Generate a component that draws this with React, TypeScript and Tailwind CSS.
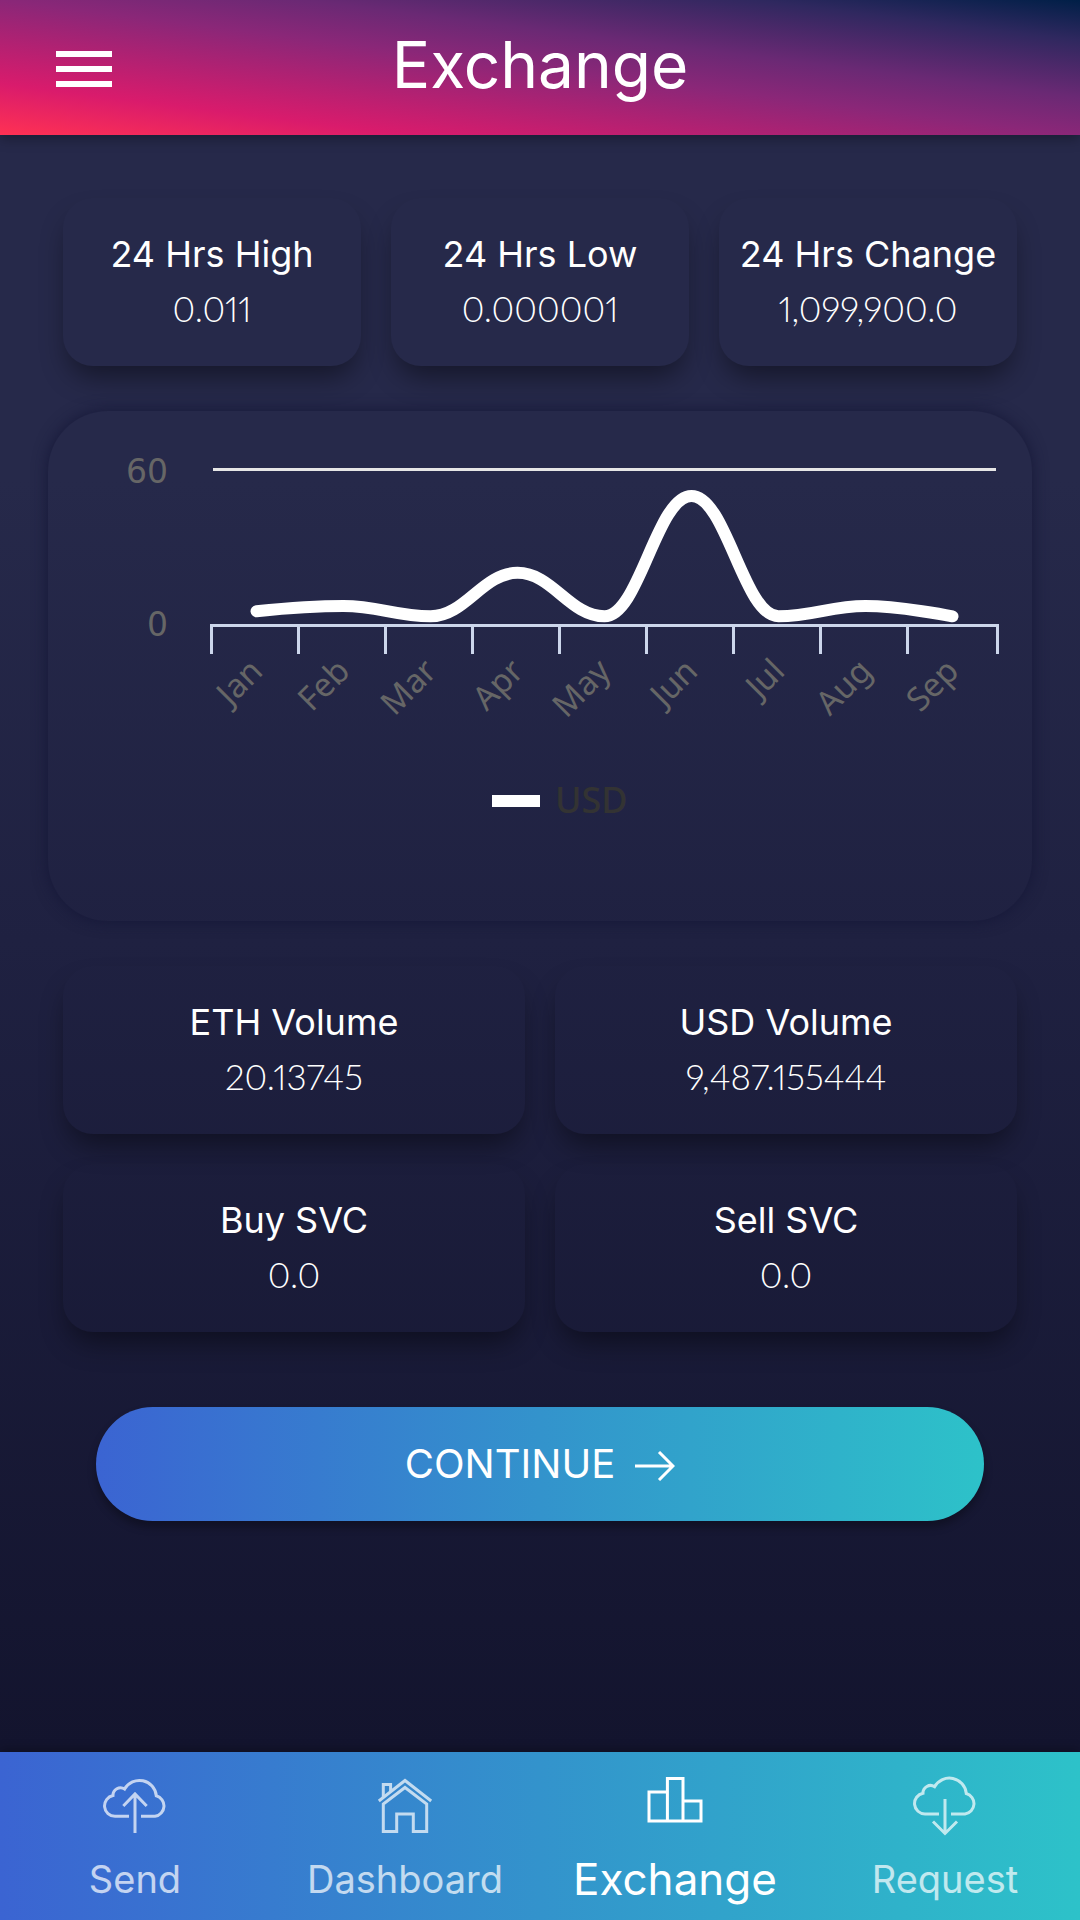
import type { ReactNode } from "react"

const dayStats = [
  { label: "24 Hrs High", value: "0.011" },
  { label: "24 Hrs Low", value: "0.000001" },
  { label: "24 Hrs Change", value: "1,099,900.0" },
]

const marketStats = [
  { label: "ETH Volume", value: "20.13745" },
  { label: "USD Volume", value: "9,487.155444" },
  { label: "Buy SVC", value: "0.0" },
  { label: "Sell SVC", value: "0.0" },
]

const series = [
  { month: "Jan", usd: 5 },
  { month: "Feb", usd: 7 },
  { month: "Mar", usd: 3 },
  { month: "Apr", usd: 20 },
  { month: "May", usd: 3 },
  { month: "Jun", usd: 50 },
  { month: "Jul", usd: 3 },
  { month: "Aug", usd: 7 },
  { month: "Sep", usd: 3 },
]

const cloud =
  "M26 42.3H12A10.5 10.5 0 0 1 10 21.5A7.5 7.5 0 0 1 21.6 15A17 17 0 0 1 53.3 21.8A10.5 10.5 0 0 1 52 42.3H38"

const tabs: { name: string; active?: boolean; icon: ReactNode }[] = [
  {
    name: "Send",
    icon: (
      <>
        <path d={cloud} />
        <path d="M32 59V20M20.3 32L32 20L43.7 32" />
      </>
    ),
  },
  {
    name: "Dashboard",
    icon: (
      <>
        <path d="M5.8 27L32 6.5L58.2 27" />
        <path d="M10.3 24V10.5H17.6V18" />
        <path d="M32 13.5L53.7 30V57.5H40.3V40H23.7V57.5H10.3V30Z" />
      </>
    ),
  },
  {
    name: "Exchange",
    active: true,
    icon: <path d="M24.4 47H6V18H24.4M40 27H58V47H24.4V4.5H40V47" />,
  },
  {
    name: "Request",
    icon: (
      <>
        <path d={cloud} transform="translate(0 -2.3)" />
        <path d="M32 25V59M20 47.5L32 59.5L44 47.5" />
      </>
    ),
  },
]

const PLOT_LEFT = 165
const PLOT_WIDTH = 783
const AXIS_Y = 213
const STEP = PLOT_WIDTH / series.length

const points = series.map((item, i) => ({
  x: PLOT_LEFT + STEP * (i + 0.5),
  y: AXIS_Y - item.usd * 2.56,
}))

// Smooth line that never overshoots a neighbouring point
function splinePath() {
  let path = `M${points[0].x} ${points[0].y}`
  let out = points[0]

  for (let i = 1; i < points.length; i++) {
    const last = points[i - 1]
    const p = points[i]
    const next = points[i + 1]
    let left = p
    let right = p

    if (next) {
      const lx = (1.5 * p.x + last.x) / 2.5
      const rx = (1.5 * p.x + next.x) / 2.5
      let ly = (1.5 * p.y + last.y) / 2.5
      let ry = (1.5 * p.y + next.y) / 2.5
      const fix = ((ry - ly) * (rx - p.x)) / (rx - lx) + p.y - ry
      ly += fix
      ry += fix

      if (ly > last.y && ly > p.y) {
        ly = Math.max(last.y, p.y)
        ry = 2 * p.y - ly
      } else if (ly < last.y && ly < p.y) {
        ly = Math.min(last.y, p.y)
        ry = 2 * p.y - ly
      }
      if (ry > next.y && ry > p.y) {
        ry = Math.max(next.y, p.y)
        ly = 2 * p.y - ry
      } else if (ry < next.y && ry < p.y) {
        ry = Math.min(next.y, p.y)
        ly = 2 * p.y - ry
      }
      left = { x: lx, y: ly }
      right = { x: rx, y: ry }
    }

    path += `C${out.x} ${out.y} ${left.x} ${left.y} ${p.x} ${p.y}`
    out = right
  }

  return path
}

function StatCard({ label, value }: { label: string; value: string }) {
  return (
    <div className="flex h-[168px] flex-col items-center justify-center rounded-[30px] pb-0.5 text-center whitespace-nowrap shadow-[0_16px_28px_-6px_rgba(0,0,0,0.45)]">
      <h2 className="text-[36px] leading-[54px]">{label}</h2>
      <p className="font-['Lato',sans-serif] text-[35px] leading-[54px] font-light proportional-nums">{value}</p>
    </div>
  )
}

function PriceChart() {
  return (
    <svg viewBox="0 0 984 510" className="block w-full" role="img" aria-label="USD price by month">
      <g className="fill-[#666666] font-['DejaVu_Sans',sans-serif] text-[33px]" textAnchor="end">
        <text x="120" y="72">60</text>
        <text x="120" y="225">0</text>
      </g>
      <path d="M165 58.5H948" stroke="#e6e6e6" strokeWidth="3" />
      <path d="M162 214.5H951" stroke="#ccd6eb" strokeWidth="3" />
      {[163.5, 250.5, 337.5, 424.5, 511.5, 598.5, 685.5, 772.5, 859.5, 949.5].map((x) => (
        <path key={x} d={`M${x} 213V243`} stroke="#ccd6eb" strokeWidth="3" />
      ))}
      <path d={splinePath()} fill="none" stroke="#ffffff" strokeWidth="12" strokeLinecap="round" />
      <g className="fill-[#666666] font-['Noto_Sans',sans-serif] text-[33px]" textAnchor="end">
        {series.map((item, i) => (
          <text key={item.month} transform={`translate(${points[i].x + 8} 262) rotate(-45)`}>
            {item.month}
          </text>
        ))}
      </g>
      <rect x="444" y="384" width="48" height="12" fill="#ffffff" />
      <text x="507" y="402" className="fill-[#333333] font-['Noto_Sans',sans-serif] text-[36px] font-medium">
        USD
      </text>
    </svg>
  )
}

export default function App() {
  return (
    <div className="flex min-h-screen flex-col bg-[linear-gradient(to_bottom,#26294a_0%,#26294a_25%,#1f2141_49%,#13142e_91%,#12132c_100%)] font-['Inter',sans-serif] text-white">
      <header className="grid h-[135px] grid-cols-[1fr_auto_1fr] items-center bg-[linear-gradient(to_top_right,#ff3153_0%,#d91b6c_19%,#8a2778_50%,#6a2974_64%,#2f285f_85%,#001f47_100%)] px-14 pt-0.5 shadow-[0_4px_12px_rgba(0,0,0,0.3)]">
        <button type="button" aria-label="Menu" className="flex w-14 flex-col gap-[9px]">
          <span className="h-1.5 w-full bg-white" />
          <span className="h-1.5 w-full bg-white" />
          <span className="h-1.5 w-full bg-white" />
        </button>
        <h1 className="pb-2 text-[64px] leading-[72px]">Exchange</h1>
      </header>

      <main className="flex-1 pt-[63px] pb-12">
        <section className="mx-[63px] grid grid-cols-3 gap-[30px]">
          {dayStats.map((stat) => (
            <StatCard key={stat.label} {...stat} />
          ))}
        </section>

        <section className="mx-12 mt-[45px] rounded-[60px] shadow-[0_0_15px_rgba(20,22,54,0.9)]">
          <PriceChart />
        </section>

        <section className="mx-[63px] mt-[45px] grid grid-cols-2 gap-[30px]">
          {marketStats.map((stat) => (
            <StatCard key={stat.label} {...stat} />
          ))}
        </section>

        <div className="mx-24 mt-[75px]">
          <button
            type="button"
            className="flex h-[114px] w-full items-center justify-center gap-5 rounded-full bg-[linear-gradient(to_right,#3b64d2,#3393cc,#2dc2c9)] text-[40px] shadow-[0_6px_9px_rgba(0,0,0,0.3)]"
          >
            CONTINUE
            <svg viewBox="0 0 40 30" className="mt-1 h-[30px] w-10" fill="none" stroke="currentColor" strokeWidth="3">
              <path d="M0 15H38M24 1L38 15L24 29" />
            </svg>
          </button>
        </div>
      </main>

      <nav className="grid h-[168px] grid-cols-4 bg-[linear-gradient(to_right,#3b64d2,#3393cc,#2dc2c9)] shadow-[0_-3px_9px_rgba(0,0,0,0.25)]">
        {tabs.map((tab) => (
          <a
            key={tab.name}
            href="#"
            aria-current={tab.active ? "page" : undefined}
            className={
              tab.active
                ? "flex flex-col items-center pt-[22px] text-[44px]"
                : "flex flex-col items-center pt-[22px] text-[38px] opacity-70"
            }
          >
            <svg viewBox="0 0 64 64" className="size-16" fill="none" stroke="currentColor" strokeWidth="3">
              {tab.icon}
            </svg>
            <span className="mt-[17px] leading-12">{tab.name}</span>
          </a>
        ))}
      </nav>
    </div>
  )
}
